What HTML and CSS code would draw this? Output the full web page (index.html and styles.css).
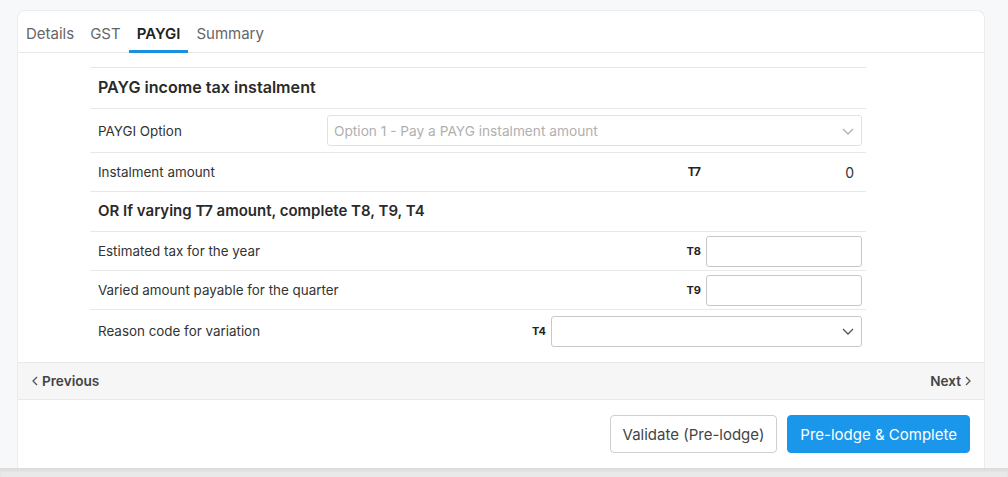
FILE: index.html
```html
<!DOCTYPE html>
<html>
<head>
<meta charset="utf-8">
<link rel="stylesheet" href="styles.css">
</head>
<body>
<div class="page">
  <div class="card">
    <div class="tabs">
      <span class="tab">Details</span>
      <span class="tab">GST</span>
      <span class="tab active">PAYGI</span>
      <span class="tab">Summary</span>
    </div>
    <div class="content">
      <div class="table">
        <div class="row head head-main">PAYG income tax instalment</div>
        <div class="row r-opt">
          <span class="label">PAYGI Option</span>
          <div class="select disabled w-opt"><span>Option 1 - Pay a PAYG instalment amount</span>
            <svg width="14" height="14" viewBox="0 0 14 14"><path d="M2 5l5 5 5-5" fill="none" stroke="#aaa" stroke-width="1.2"/></svg>
          </div>
        </div>
        <div class="row r-amt">
          <span class="label">Instalment amount</span>
          <span class="code">T7</span>
          <span class="value">0</span>
        </div>
        <div class="row head head-sub">OR If varying T7 amount, complete T8, T9, T4</div>
        <div class="row r-in">
          <span class="label">Estimated tax for the year</span>
          <span class="code">T8</span>
          <div class="input"></div>
        </div>
        <div class="row r-in">
          <span class="label">Varied amount payable for the quarter</span>
          <span class="code">T9</span>
          <div class="input"></div>
        </div>
        <div class="row r-in last">
          <span class="label">Reason code for variation</span>
          <span class="code">T4</span>
          <div class="select w-t4"><span></span>
            <svg width="14" height="14" viewBox="0 0 14 14"><path d="M2 5l5 5 5-5" fill="none" stroke="#555" stroke-width="1.3"/></svg>
          </div>
        </div>
      </div>
    </div>
    <div class="navbar">
      <span class="nav"><svg width="8" height="10" viewBox="0 0 8 10"><path d="M6 1L2 5l4 4" fill="none" stroke="#555" stroke-width="1.3"/></svg>Previous</span>
      <span class="nav">Next<svg width="8" height="10" viewBox="0 0 8 10"><path d="M2 1l4 4-4 4" fill="none" stroke="#555" stroke-width="1.3"/></svg></span>
    </div>
    <div class="actions">
      <button class="btn">Validate (Pre-lodge)</button>
      <button class="btn primary">Pre-lodge &amp; Complete</button>
    </div>
  </div>
</div>
<div class="strip"></div>
</body>
</html>
```
FILE: styles.css
```css
* { box-sizing: border-box; }
html, body { margin: 0; padding: 0; }
body {
  background: #f7f8fa;
  font-family: Inter, "Noto Sans", sans-serif;
  color: #333;
  width: 1008px;
  height: 477px;
  overflow: hidden;
}
.page { padding: 10px 23px 0 17px; height: 468px; }
.card {
  background: #fff;
  border: 1px solid #ececec;
  border-bottom: none;
  border-radius: 8px 8px 0 0;
  height: 458px;
  display: flex;
  flex-direction: column;
}
.tabs {
  display: flex;
  padding: 0;
  height: 42px;
  border-bottom: 1px solid #e8e8e8;
  align-items: stretch;
}
.tab {
  font-size: 15px;
  color: #666;
  padding: 13px 8px 0 8px;
}
.tab.active {
  color: #222;
  font-weight: 600;
  border-bottom: 3px solid #1a91e0;
  margin-bottom: -1px;
}
.content { padding: 14px 0 0 72px; height: 309px; }
.table { width: 776px; border-top: 1px solid #e6e6e6; }
.row {
  display: flex;
  align-items: center;
  border-bottom: 1px solid #e8e8e8;
  padding: 4px 4px 4px 8px;
  font-size: 13.4px;
  color: #333;
}
.row.last { border-bottom: none; padding-top: 7px; }
.row.head {
  font-weight: 600;
  color: #2a2a2a;
  padding-top: 2px;
}
.head-main { font-size: 16.1px; height: 41px; }
.head-sub { font-size: 15px; height: 40px; }
.row.r-opt { height: 44px; }
.row.r-amt { height: 39px; }
.row.r-in { height: 39px; }
.label { flex: 1; }
.code {
  font-size: 11px;
  font-weight: 700;
  color: #222;
  margin-right: 5px;
}
.r-amt .code { margin-right: 5px; font-size: 11.4px; }
.value { width: 156px; text-align: right; padding-right: 8px; font-size: 14px; }
.input {
  width: 156px;
  height: 31px;
  border: 1px solid #c8c8c8;
  border-radius: 3px;
  background: #fff;
}
.select {
  height: 31px;
  border: 1px solid #c8c8c8;
  border-radius: 3px;
  display: flex;
  align-items: center;
  justify-content: space-between;
  padding: 0 6px 0 6px;
  background: #fff;
}
.select.disabled { border-color: #e2e2e2; color: #b0b0b0; font-size: 13.7px; }
.w-opt { width: 535px; }
.w-t4 { width: 311px; }
.navbar {
  background: #f6f6f6;
  border-top: 1px solid #e8e8e8;
  border-bottom: 1px solid #e8e8e8;
  height: 38px;
  display: flex;
  justify-content: space-between;
  align-items: center;
  padding: 0 12px 0 13px;
}
.nav {
  font-size: 13.6px;
  font-weight: 600;
  color: #444;
  display: flex;
  align-items: center;
  gap: 3px;
}
.actions {
  display: flex;
  justify-content: flex-end;
  gap: 10px;
  padding: 15px 14px 0 0;
}
.btn {
  font-family: Inter, "Noto Sans", sans-serif;
  font-size: 15px;
  height: 38px;
  padding: 0 12px;
  border: 1px solid #cfcfcf;
  border-radius: 4px;
  background: #fff;
  color: #444;
}
.btn.primary {
  background: #1a96ea;
  border-color: #1a96ea;
  color: #fff;
}
.strip {
  height: 9px;
  background: #e9e9e9;
  border-top: 1px solid #dcdcdc;
  box-shadow: inset 0 2px 3px rgba(0,0,0,0.06);
}
```
